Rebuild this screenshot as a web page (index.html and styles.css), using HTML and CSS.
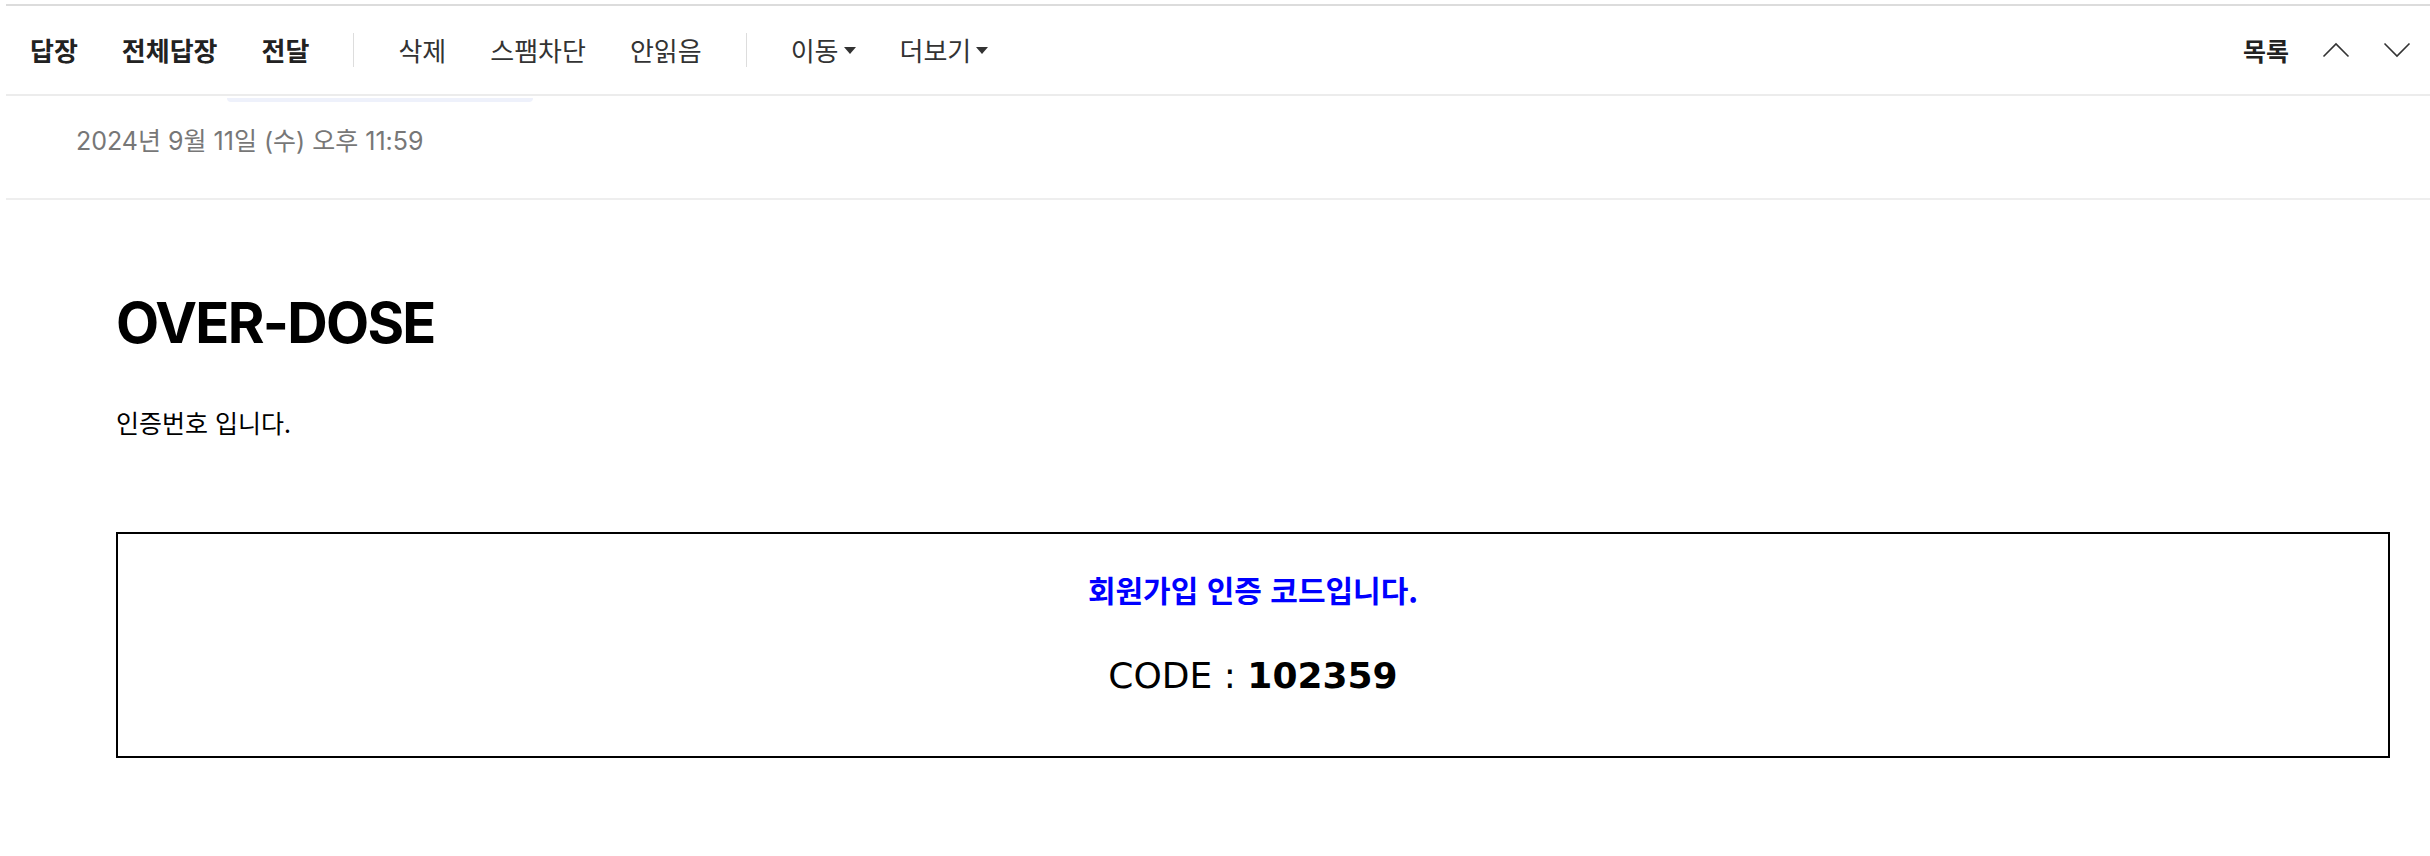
FILE: index.html
```html
<!DOCTYPE html>
<html lang="ko">
<head>
<meta charset="utf-8">
<title>메일 읽기</title>
<link rel="stylesheet" href="styles.css">
</head>
<body>
<div class="mail">
  <div class="toolbar">
    <div class="toolbar-left">
      <span class="tb-item tb-strong">답장</span>
      <span class="tb-item tb-strong">전체답장</span>
      <span class="tb-item tb-strong">전달</span>
      <span class="tb-sep"></span>
      <span class="tb-item">삭제</span>
      <span class="tb-item">스팸차단</span>
      <span class="tb-item">안읽음</span>
      <span class="tb-sep"></span>
      <span class="tb-item tb-drop">이동<i class="caret"></i></span>
      <span class="tb-item tb-drop">더보기<i class="caret"></i></span>
    </div>
    <div class="toolbar-right">
      <span class="tb-item tb-strong tb-list">목록</span>
      <svg class="chev" width="28" height="16" viewBox="0 0 28 16"><polyline points="1.5,14.5 14,2 26.5,14.5" fill="none" stroke="#333" stroke-width="1.6"/></svg>
      <svg class="chev" width="28" height="16" viewBox="0 0 28 16"><polyline points="1.5,1.5 14,14 26.5,1.5" fill="none" stroke="#333" stroke-width="1.6"/></svg>
    </div>
  </div>
  <div class="peek"></div>
  <div class="date">2024년 9월 11일 (수) 오후 11:59</div>
  <div class="content">
    <h1 class="title">OVER-DOSE</h1>
    <p class="intro">인증번호 입니다.</p>
    <div class="codebox">
      <p class="codebox-title">회원가입 인증 코드입니다.</p>
      <p class="codebox-code">CODE : <b>102359</b></p>
    </div>
  </div>
</div>
</body>
</html>
```
FILE: styles.css
```css
html, body {
  margin: 0;
  padding: 0;
  background: #fff;
}

body {
  font-family: "Noto Sans CJK KR", "Noto Sans", sans-serif;
  color: #000;
}

.mail {
  position: relative;
  margin: 4px 0 0 6px;
  border-top: 2px solid #dcdcdc;
}

.toolbar {
  height: 88px;
  display: flex;
  align-items: center;
  justify-content: space-between;
  padding: 0 19px 0 24px;
  border-bottom: 2px solid #ececec;
}

.toolbar-left,
.toolbar-right {
  display: flex;
  align-items: center;
}

.toolbar-left {
  gap: 44px;
}

.toolbar-right {
  gap: 33px;
}

.tb-item {
  font-size: 26px;
  line-height: 34px;
  color: #333;
  white-space: nowrap;
}

.tb-strong {
  font-weight: 700;
  color: #222;
}

.tb-list {
  font-size: 25px;
}

.tb-sep {
  width: 1px;
  height: 34px;
  background: #dddddd;
}

.tb-drop {
  display: inline-flex;
  align-items: center;
}

.caret {
  display: inline-block;
  margin-left: 5px;
  width: 0;
  height: 0;
  border-left: 6px solid transparent;
  border-right: 6px solid transparent;
  border-top: 7px solid #333;
}

.chev {
  display: block;
}

.peek {
  position: absolute;
  left: 221px;
  top: 92px;
  width: 306px;
  height: 4px;
  border-radius: 0 0 10px 10px;
  background: #eef1fb;
}

.date {
  height: 86px;
  padding: 0 0 16px 70px;
  display: flex;
  align-items: center;
  font-family: Inter, "Noto Sans CJK KR", sans-serif;
  font-size: 25px;
  color: #777;
  border-bottom: 2px solid #eeeeee;
}

.content {
  padding: 0 40px 0 110px;
}

.title {
  margin: 95px 0 0;
  font-family: Inter, "Noto Sans", sans-serif;
  font-weight: 700;
  font-size: 56px;
  line-height: 56px;
  letter-spacing: -1.7px;
}

.intro {
  margin: 54px 0 0;
  font-size: 25px;
  line-height: 34px;
}

.codebox {
  margin-top: 93px;
  border: 2px solid #000;
  padding: 37px 0 58px;
  text-align: center;
}

.codebox-title {
  margin: 0;
  font-size: 30px;
  line-height: 36px;
  font-weight: 700;
  color: #0000ff;
}

.codebox-code {
  margin: 47px 0 0;
  font-family: "DejaVu Sans", Verdana, sans-serif;
  font-size: 36px;
  line-height: 44px;
}

.codebox-code b {
  font-weight: 700;
}
```
